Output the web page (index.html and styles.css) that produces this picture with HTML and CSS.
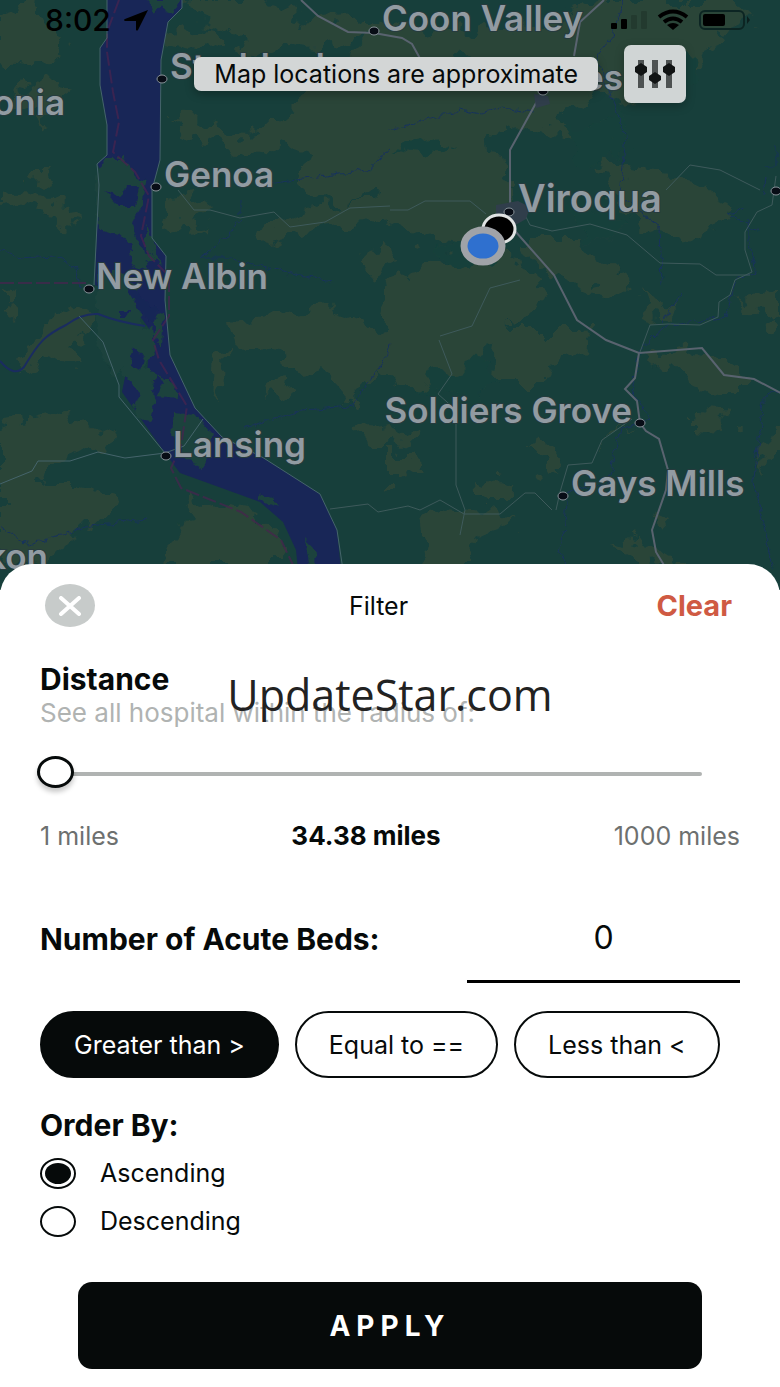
FILE: index.html
```html
<!DOCTYPE html>
<html lang="en">
<head>
<meta charset="utf-8">
<meta name="viewport" content="width=device-width, initial-scale=1">
<title>Hospital filter</title>
<link rel="stylesheet" href="styles.css">
</head>
<body>
<div class="screen">
  <section class="map" aria-label="Map">
    <svg class="map-art" viewBox="0 0 780 590" preserveAspectRatio="xMidYMin slice">
      <defs>
        <filter id="rough" x="-5%" y="-5%" width="110%" height="110%">
          <feTurbulence type="fractalNoise" baseFrequency="0.045" numOctaves="3" seed="7"/>
          <feDisplacementMap in="SourceGraphic" scale="38" xChannelSelector="R" yChannelSelector="G"/>
        </filter>
        <filter id="ripple" x="-10%" y="-10%" width="120%" height="120%">
          <feTurbulence type="fractalNoise" baseFrequency="0.12" numOctaves="2" seed="3"/>
          <feDisplacementMap in="SourceGraphic" scale="9" xChannelSelector="R" yChannelSelector="G"/>
        </filter>
      </defs>
      <rect class="land" width="780" height="590"/>
      <g class="hills" filter="url(#rough)">
        <path d="M0 10l30-6 20 25 15 10-10 22-25-8-20 18-10-15z"/>
        <path d="M30 78l45 12-15 12-18 28-8-20-20-10z"/>
        <path d="M0 195l25-4 42 10 5 32-15-18-30-8-27 5z"/>
        <path d="M30 172l24 0-8 12-18-2z"/>
        <path d="M150 20l30 14 28-10 20 22-28 6-30-8z"/>
        <path d="M190 0h75l45 22 60-4 10 14-60 16-40-4-22 14-28-30-30-8z"/>
        <path d="M165 118l50 2 14 14 45-4 26-24 40 0 30 18 0 24-40 8-40-8-40 10-25-10-30-8z"/>
        <path d="M165 200l24-4 18 14-15 14 20 8-30 2-16-14z"/>
        <path d="M255 232l40-18 50-14 45 0 0 20-55 8-40 4-30 10z"/>
        <path d="M365 255l25-10 6 20-22 10z"/>
        <path d="M390 20l50 14 40-8 60 2 60-28h140l10 20-30 10-20 40-45 10-25 26-40-14-30 20 8 30-50-20-28 10 4 40-34 10-20 60-45-20-25-30-30 10-40-16 20-50-30-30z"/>
        <path d="M390 170l60-24 55 10 8 60-28 30-50-4-45-20z"/>
        <path d="M600 160l50 12 60 14 20 30-40 24-50-14-30-28z"/>
        <path d="M520 240l60 0 40 30 10 26-40-6-34-14-22-16z"/>
        <path d="M400 270l100-20 40 26 4 26-30 26-24 10-20 40-70 10-26-24 8-50z"/>
        <path d="M235 320l40-4 50-8 40 14 25 26-14 30-24 26-24-28-28-6-24-22-36-4z"/>
        <path d="M270 384l24-4-8 22-22-4z"/>
        <path d="M214 358l14-16-4 44-14 12z"/>
        <path d="M79 302l16 14 0 12-26 20 6 20-26-12-36 20 30-46z"/>
        <path d="M0 290l12 2 0 16-12 4z"/>
        <path d="M0 424l60-10 26 10 32 14-24 12-38 12-12 22 36 0 26 10 10 16-18 16-28 14-30 30-40-18z"/>
        <path d="M190 490l14 22 20-8 36 6 20 26 4 30-130 0 30-30z"/>
        <path d="M360 432l30-4 24 10-20 10-30 0z"/>
        <path d="M534 425l12 20 18 22-18 8-14-26z"/>
        <path d="M390 452l20 0 16 20-36 12z"/>
        <path d="M420 520l30-12 40 4 28 10-40 14-10 34-40 0-6-24z"/>
        <path d="M480 476l36 8-10 18-24 0z"/>
        <path d="M612 434l18-12-28 26z"/>
        <path d="M650 356l50-4 44 20 0 16-30 0-40-14z"/>
        <path d="M690 414l40 4-10 14-30-2z"/>
        <path d="M740 300l40-8 0 36-22-12z"/>
        <path d="M640 286l24 24 18-14-12 24-24-6z"/>
        <path d="M610 536l36 6 38 22-34 2-20-12z"/>
        <path d="M770 430l10-4v26l-20 14z"/>
        <path d="M655 512l14 6-10 12-8-10z"/>
        <path d="M500 330l80 0 12 18-34 12-10 20-50 0z"/>
      </g>
      <g class="valleys" filter="url(#rough)">
        <path d="M430 62l30-6 26 12-30 10z"/>
        <path d="M390 148l44-12 26 6-30 14z"/>
        <path d="M560 130l26 0 34-20 6 36-24 20-30-10z"/>
        <path d="M640 66l30-16 30 4-14 30z"/>
        <path d="M560 200l40 10 30 14-40 20z"/>
        <path d="M440 250l24-10 26 20-20 16z"/>
        <path d="M430 372l60-12 10 26-40 16-40-14z"/>
      </g>
      <path class="water" d="M107 0H182V8L168 22 161 60 160 160 152 190 152 238 166 256 165 300 170 355 195 408 222 437 262 457 320 494 337 530 343 590H300L296 550 283 522 260 502 205 482 180 473 165 453 122 392 126 372 146 390 150 330 128 300 95 285 97 225 104 176 97 164 107 155V125L100 85V48L107 38Z"/>
      <g class="islands" filter="url(#ripple)">
        <path d="M106 158l18 0 14 20 8 6-4 22-10 16 8 24 16 12-14 6-12-18-8-10-24-6-2-52z"/>
        <path d="M152 238l-6-12 0 22 14 16z"/>
        <path d="M148 0h32l-8 14-12-8-6 8z"/>
        <path d="M130 250l14 6 4 14-16-4z"/>
        <path d="M98 272l24 0 14 18 8 40-10 26-20 22-18-38z"/>
        <path d="M130 338l22-10 4 20-12 20 30 16 4 14-22-2-4 26-16-2-4-10 8-18-18-18z"/>
        <path d="M154 316l10-6-2 36-8-10z"/>
        <path d="M174 412l20 2 18 20-8 36-18-12-14-24z"/>
        <path d="M258 494l14 4 6 8-20-6z"/>
        <path d="M305 540l10 10-2 34z"/>
      </g>
      <g class="pools" filter="url(#ripple)">
        <path d="M104 190l16 8 6-12 12 0-4 20-16 0z"/>
        <path d="M128 288l8 2 14 18 8-2-4 18-14-10z"/>
        <path d="M119 310h12l-4 8-8 0z"/>
        <path d="M132 348l14 6-6 18-10-6z"/>
        <path d="M156 376l8 6-6 16-8-8z"/>
      </g>
      <g class="streams">
        <path class="stream-wide" d="M0 361Q14 378 24 367C40 340 46 335 66 325Q82 313 98 314Q118 322 145 326"/>
        <g filter="url(#ripple)">
          <path d="M0 250l20 8 36-2 20 12 4 18M200 258l26-20 16-20M200 258h30l40 10 60 14M268 184l100-14 22-20M241 200v16M244 428l60-18 46-4 34-44 6-20M0 528l30 16 60-18 56-6"/>
          <path d="M390 130l70-20 20 4 20-6 34 4M622 0l-10 36-16 20 30 80-6 60 40 30 2 60M744 208l-16 6 30 16M776 145v22l-10 0M766 176l-2 20M748 220l0 20 8 32-20 8-10 36-60 10-26 24-8 40 18 30-30 8-12 56-40 6-4 44-6 18 18 26"/>
          <path d="M790 380l-26 20-10 80 20 90M682 292l-20 30"/>
        </g>
      </g>
      <g class="border-line">
        <path d="M119 0l-12 32 0 20 6 40 6 30-6 30 22 20 14 24-8 40 8 20 20 20 0 40-16 24 6 20 28 46-6 40-10 22 10 20 60 24 40 28 26 54"/>
        <path d="M0 283H88"/>
      </g>
      <g class="shore">
        <path d="M107 0V38L100 48V85L107 125V155L97 164 99 185 97 225 94 285"/>
        <path d="M182 0V8L168 22 161 60 160 160 152 190V238L166 256 165 300 170 355 195 408 222 437 262 457 320 494 337 530 343 570"/>
        <path d="M79 316L103 342 119 385V397L165 453M165 453L125 458 98 452 70 461H38L32 471 0 484M165 453L184 446 203 419"/>
      </g>
      <g class="lanes">
        <path d="M178 190L194 210H210L240 218 274 212 290 227 325 222 350 208 390 206M390 210H408L425 201H470L486 214M520 205L530 225 552 231 590 224 627 235 660 263 700 264 716 275 750 275M666 190L690 165 720 170 760 190M330 509L368 504 378 512 408 506 420 510 440 500 464 514H500L525 493H535L552 510M439 340L452 374 438 394 456 410V485L465 510 460 535M520 280L490 288 472 326 440 336"/>
        <path d="M640 352L650 325 668 324 700 325 718 317 719 302 730 295 735 280 752 272 745 250V232L757 212 772 205 776 176M632 419L602 440 592 463 568 465 560 492 556 510"/>
      </g>
      <g class="roads">
        <path d="M301 0L318 16 348 32 374 33 402 38 412 44 422 62M604 0L580 22 574 56M541 94L510 150V210L515 231 554 275 577 320 606 340 639 353 702 348 724 375 754 379 790 398M639 353L635 378 625 389 637 401 640 423 646 431 659 439 668 470 666 490 652 530 656 552 670 575"/>
      </g>
      <path class="town" d="M496 205l22-4 12 6-4 12-14 8-16-8zM534 94l14 2 2 8-14 4z"/>
      <g class="places">
        <text x="382" y="31">Coon Valley</text>
        <text x="170" y="79">Stoddard</text>
        <text x="623" y="90" text-anchor="end">es</text>
        <text x="65" y="115" text-anchor="end">Caledonia</text>
        <text x="164" y="187">Genoa</text>
        <text class="town-name" x="518" y="212">Viroqua</text>
        <text x="96" y="289">New Albin</text>
        <text x="632" y="423" text-anchor="end">Soldiers Grove</text>
        <text x="173" y="457">Lansing</text>
        <text x="571" y="496">Gays Mills</text>
        <text x="48" y="569" text-anchor="end">Waukon</text>
      </g>
      <g class="dots">
        <ellipse cx="374" cy="31" rx="5" ry="4"/>
        <ellipse cx="162" cy="79" rx="5" ry="4"/>
        <ellipse cx="156" cy="187" rx="5" ry="4"/>
        <ellipse cx="89" cy="289" rx="5" ry="4"/>
        <ellipse cx="509" cy="212" rx="5" ry="4"/>
        <ellipse cx="543" cy="91" rx="5" ry="4"/>
        <ellipse cx="776" cy="191" rx="5" ry="4"/>
        <ellipse cx="640" cy="423" rx="5" ry="4"/>
        <ellipse cx="166" cy="456" rx="5" ry="4"/>
        <ellipse cx="563" cy="496" rx="5" ry="4"/>
      </g>
      <ellipse class="pin-hospital" cx="499" cy="229" rx="16" ry="14"/>
      <ellipse class="pin-me" cx="483" cy="246" rx="19" ry="16"/>
    </svg>

    <div class="map-overlay">
      <div class="status">
        <span class="time">8:02</span>
        <svg class="locator" width="26" height="22" viewBox="0 0 26 22"><path d="M25 1L15 21q-1 1-2 0V12H2q-2-1 0-2z"/></svg>
        <svg class="indicators" width="140" height="22" viewBox="0 0 140 22">
          <rect x="1" y="14" width="6" height="6" rx="1"/>
          <rect x="11" y="10" width="6" height="10" rx="1"/>
          <g opacity=".15"><rect x="21" y="6" width="6" height="14" rx="1"/><rect x="31" y="2" width="6" height="18" rx="1"/></g>
          <g class="wifi"><path d="M49 8Q63-3 77 8"/><path d="M54 13Q63 6 72 13"/></g>
          <path d="M57 16q6-4 12 0l-6 5z"/>
          <rect class="cell" x="90" y="2" width="44" height="18" rx="5"/>
          <rect x="93" y="5" width="22" height="12" rx="2"/>
          <path opacity=".5" d="M137 7l3 4-3 4z"/>
        </svg>
      </div>
      <div class="tools">
        <p class="notice">Map locations are approximate</p>
        <button class="tune" type="button" aria-label="Filters">
          <svg width="40" height="30" viewBox="0 0 40 30">
            <g class="rails"><path d="M6 1V29M20 1V29M34 1V29"/></g>
            <path d="M6 4l6 4v5l-6 4-6-4V8zM20 13l6 4v4l-6 4-6-4v-4zM34 4l6 4v5l-6 4-6-4V8z"/>
          </svg>
        </button>
      </div>
    </div>
  </section>

  <form class="sheet" onsubmit="return false">
    <header class="sheet-head">
      <button class="close" type="button" aria-label="Close">
        <svg width="24" height="20" viewBox="0 0 24 20"><path d="M3 2L21 18M21 2L3 18"/></svg>
      </button>
      <h1 class="sheet-title">Filter</h1>
      <button class="clear" type="reset">Clear</button>
    </header>

    <section class="distance">
      <label class="heading" for="radius">Distance</label>
      <p class="hint">See all hospital within the radius of:</p>
      <span class="watermark">UpdateStar.com</span>
      <input class="slider" id="radius" type="range" min="1" max="1000" step="any" value="1">
      <div class="scale">
        <span>1 miles</span>
        <output class="chosen" for="radius">34.38 miles</output>
        <span class="scale-end">1000 miles</span>
      </div>
    </section>

    <div class="beds">
      <label class="heading" for="beds">Number of Acute Beds:</label>
      <input class="count" id="beds" type="text" inputmode="numeric" value="0">
    </div>
    <div class="pills">
      <button class="pill pill-on" type="button" aria-pressed="true">Greater than &gt;</button>
      <button class="pill" type="button" aria-pressed="false">Equal to ==</button>
      <button class="pill" type="button" aria-pressed="false">Less than &lt;</button>
    </div>

    <fieldset class="order">
      <legend class="heading">Order By:</legend>
      <label class="choice"><input type="radio" name="order" checked>Ascending</label>
      <label class="choice"><input type="radio" name="order">Descending</label>
    </fieldset>

    <button class="apply" type="submit">APPLY</button>
  </form>
</div>
</body>
</html>
```

FILE: styles.css
```css
* {
  box-sizing: border-box;
}

body {
  margin: 0;
  background: #fff;
  color: #060a0a;
  font: 25px/32px Inter, "Liberation Sans", sans-serif;
}

button,
input {
  font: inherit;
  color: inherit;
}

button {
  cursor: pointer;
}

p,
h1 {
  margin: 0;
}

.screen {
  display: flex;
  flex-direction: column;
  min-height: 100vh;
}

/* Map */
.map {
  position: relative;
  overflow: hidden;
}

.map-art {
  display: block;
  width: 100%;
  height: auto;
}

.land { fill: #173f3b; }
.hills { fill: #2a4539; }
.valleys { fill: #19413b; }
.water, .pools { fill: #182657; }
.islands { fill: #1b433d; }

.streams, .roads, .lanes, .shore, .border-line, .rails, .wifi {
  fill: none;
}

.streams { stroke: #19335a; stroke-width: 1; }
.stream-wide { stroke: #1a2c60; stroke-width: 2; }
.border-line { stroke: #48244f; stroke-width: 2; stroke-dasharray: 14 4; opacity: .7; }
.shore { stroke: #45646b; stroke-width: 1; }
.lanes { stroke: #3e5a5b; stroke-width: 1; }
.roads { stroke: #59636f; stroke-width: 2; }
.town { fill: #303e4b; }

.places {
  fill: #929ba2;
  font-size: 35px;
  font-weight: 600;
  paint-order: stroke;
  stroke: #263b3e;
  stroke-width: 2px;
}

.town-name {
  font-size: 38px;
}

.dots ellipse {
  fill: #080d16;
  stroke: #89939a;
  stroke-width: 1;
}

.pin-hospital {
  fill: #000;
  stroke: #e0e3e3;
  stroke-width: 3;
}

.pin-me {
  fill: #2f70cf;
  stroke: #a0a3a8;
  stroke-width: 7;
}

.map-overlay {
  position: absolute;
  inset: 0 0 auto;
}

.status {
  display: flex;
  align-items: center;
  height: 40px;
  padding: 0 30px 0 45px;
  color: #000;
}

.time {
  font-size: 30px;
  font-weight: 500;
}

.locator {
  margin-left: 12px;
}

.indicators {
  margin-left: auto;
}

.wifi {
  stroke: #000;
  stroke-width: 4;
}

.cell {
  fill: none;
  stroke: #0c2523;
  stroke-width: 2;
}

.tools {
  display: flex;
  align-items: center;
  justify-content: flex-end;
  gap: 26px;
  padding: 5px 94px 0 0;
}

.notice {
  padding: 1px 20px;
  border-radius: 7px;
  background: #d3d6d6;
  box-shadow: 0 3px 10px rgb(0 0 0 / 30%);
}

.tune {
  display: grid;
  place-items: center;
  width: 62px;
  height: 58px;
  padding: 0;
  border: 0;
  border-radius: 7px;
  background: #d0d5d5;
  box-shadow: 0 3px 10px rgb(0 0 0 / 25%);
}

.tune svg {
  fill: #111414;
}

.rails {
  stroke: #4d5252;
  stroke-width: 6;
}

/* Filter sheet */
.sheet {
  position: relative;
  display: flex;
  flex: 1;
  flex-direction: column;
  margin-top: -26px;
  padding: 20px 40px 19px;
  border-radius: 32px 32px 0 0;
  background: #fff;
}

.sheet-head {
  display: grid;
  grid-template-columns: 1fr auto 1fr;
  align-items: center;
  padding: 0 8px 0 5px;
}

.close {
  display: grid;
  place-items: center;
  width: 50px;
  height: 43px;
  padding: 0;
  border: 0;
  border-radius: 50%;
  background: #c7cbca;
}

.close svg {
  fill: none;
  stroke: #fff;
  stroke-width: 4;
  stroke-linecap: round;
}

.sheet-title {
  padding-right: 20px;
  font-size: 25px;
  font-weight: 400;
}

.clear {
  justify-self: end;
  padding: 0;
  border: 0;
  background: none;
  color: #cf5a43;
  font-size: 29px;
  font-weight: 700;
}

.heading {
  padding: 0;
  font-size: 30px;
  font-weight: 700;
}

.distance {
  position: relative;
  display: flex;
  flex-direction: column;
  margin-top: 36px;
}

.hint {
  margin-top: 2px;
  color: #b0b3b2;
  font-size: 26px;
}

.watermark {
  position: absolute;
  top: 0;
  left: 0;
  right: 0;
  color: #222;
  font: 43px/64px "Open Sans", "Noto Sans", sans-serif;
  text-align: center;
  pointer-events: none;
}

.slider {
  height: 40px;
  margin: 25px 38px 0 -3px;
  appearance: none;
  background: none;
}

.slider::-webkit-slider-runnable-track {
  height: 4px;
  border-radius: 2px;
  background: #b0b3b2;
}

.slider::-webkit-slider-thumb {
  width: 37px;
  height: 32px;
  margin-top: -16px;
  appearance: none;
  border: 3px solid #060a0a;
  border-radius: 50%;
  background: #fff;
  box-shadow: 0 4px 5px rgb(0 0 0 / 22%);
}

.scale {
  display: grid;
  grid-template-columns: 1fr auto 1fr;
  margin-top: 26px;
  color: #6d706f;
}

.scale-end {
  text-align: right;
}

.chosen {
  padding-right: 48px;
  color: #060a0a;
  font-size: 26px;
  font-weight: 700;
}

.beds {
  display: flex;
  align-items: center;
  justify-content: space-between;
  gap: 24px;
  margin-top: 43px;
}

.count {
  width: 39%;
  height: 88px;
  padding: 0;
  border: 0;
  border-bottom: 3px solid #000;
  border-radius: 0;
  background: none;
  font-size: 32px;
  text-align: center;
}

.pills {
  display: flex;
  gap: 16px;
  margin-top: 28px;
}

.pill {
  height: 67px;
  padding: 0 32px;
  border: 2px solid #060a0a;
  border-radius: 34px;
  background: #fff;
}

.pill-on {
  background: #060a0a;
  color: #fff;
}

.order {
  display: flex;
  flex-direction: column;
  margin: 31px 0 0;
  padding: 0;
  border: 0;
}

.order .heading {
  margin-bottom: 8px;
}

.choice {
  display: flex;
  align-items: center;
  gap: 24px;
  height: 48px;
}

.choice input {
  width: 36px;
  height: 31px;
  margin: 0;
  appearance: none;
  border: 2px solid #060a0a;
  border-radius: 50%;
}

.choice input:checked {
  padding: 3px;
  background: #060a0a content-box;
}

.apply {
  height: 87px;
  margin: 37px 38px 0;
  border: 0;
  border-radius: 14px;
  background: #060a0a;
  color: #fff;
  font-size: 28px;
  font-weight: 700;
  letter-spacing: 6px;
}
```
